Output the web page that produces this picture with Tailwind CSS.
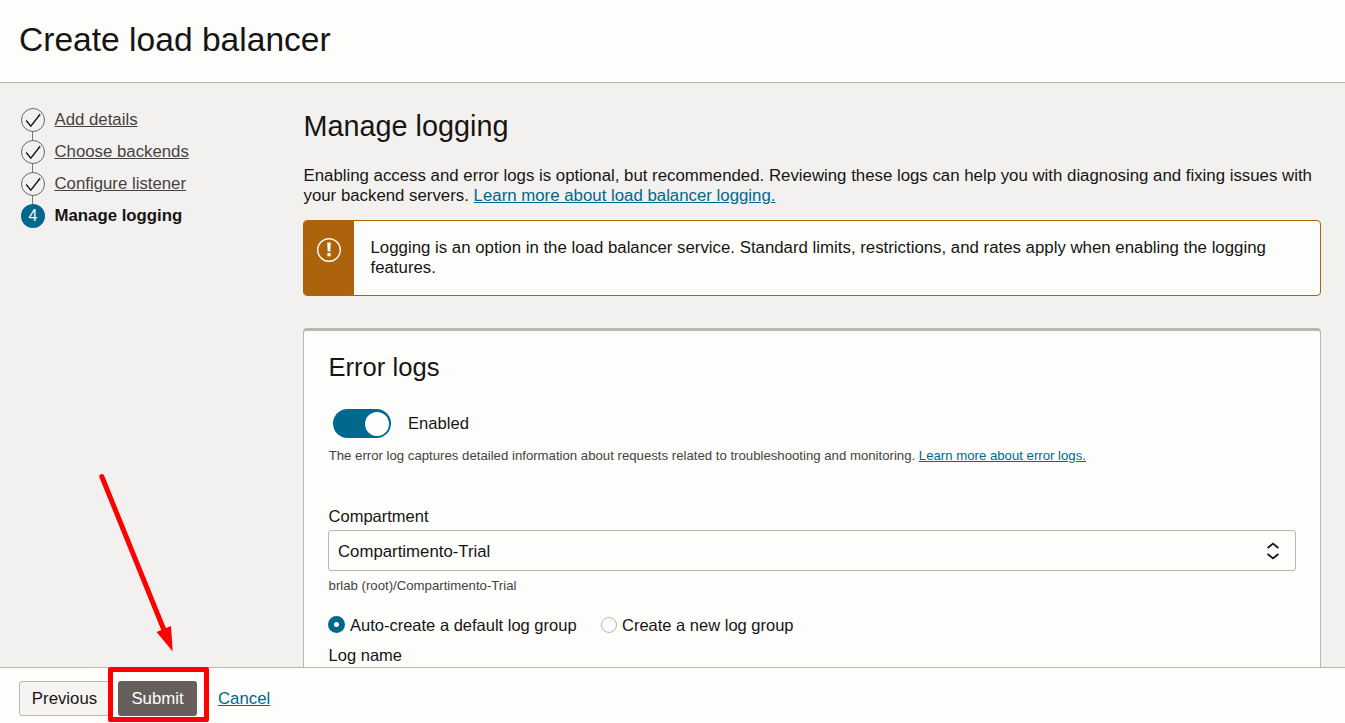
<!DOCTYPE html>
<html lang="en">
<head>
<meta charset="utf-8">
<title>Create load balancer</title>
<script src="https://cdn.jsdelivr.net/npm/@tailwindcss/browser@4"></script>
</head>
<body class="relative flex h-[723px] w-[1345px] flex-col overflow-hidden bg-[#fdfdfc] font-['Liberation_Sans',Arial,sans-serif] text-[16.8px] leading-5 text-[#161513]">
<header class="h-[83px] shrink-0 border-b border-[#bcb6b1] pl-[19px] pt-[20px]">
  <h1 class="text-[33.6px] leading-10 whitespace-nowrap">Create load balancer</h1>
</header>
<main class="flex min-h-0 flex-1 overflow-hidden bg-[#f3f1f0]">
  <nav class="w-[303px] shrink-0 pl-[21px] pt-[25px]">
    <ol class="flex flex-col">
      <li class="flex h-8 gap-[9.5px]">
        <svg class="shrink-0" width="24" height="32" viewBox="0 0 24 32" fill="none"><circle cx="12" cy="12" r="11.5" stroke="#6b6764"/><path d="M5.2 12.5l4.6 5.7L19.2 6.3" stroke="#161513" stroke-width="1.4"/><path d="M11.5 24v8" stroke="#7c7874"/></svg>
        <a class="mt-[2px] text-[#45423f] underline">Add details</a>
      </li>
      <li class="flex h-8 gap-[9.5px]">
        <svg class="shrink-0" width="24" height="32" viewBox="0 0 24 32" fill="none"><circle cx="12" cy="12" r="11.5" stroke="#6b6764"/><path d="M5.2 12.5l4.6 5.7L19.2 6.3" stroke="#161513" stroke-width="1.4"/><path d="M11.5 24v8" stroke="#7c7874"/></svg>
        <a class="mt-[2px] text-[#45423f] underline">Choose backends</a>
      </li>
      <li class="flex h-8 gap-[9.5px]">
        <svg class="shrink-0" width="24" height="32" viewBox="0 0 24 32" fill="none"><circle cx="12" cy="12" r="11.5" stroke="#6b6764"/><path d="M5.2 12.5l4.6 5.7L19.2 6.3" stroke="#161513" stroke-width="1.4"/><path d="M11.5 24v8" stroke="#7c7874"/></svg>
        <a class="mt-[2px] text-[#45423f] underline">Configure listener</a>
      </li>
      <li class="flex h-8 gap-[9.5px]">
        <span class="flex size-6 items-center justify-center rounded-full bg-[#00688c] text-[16px] text-white">4</span>
        <b class="mt-[2px]">Manage logging</b>
      </li>
    </ol>
  </nav>
  <section class="w-[1018px] shrink-0 pt-[27px]">
    <h2 class="pl-[0.5px] text-[28.8px] leading-8 whitespace-nowrap">Manage logging</h2>
    <p class="mt-6 pl-[0.5px] text-[16.82px] whitespace-nowrap">Enabling access and error logs is optional, but recommended. Reviewing these logs can help you with diagnosing and fixing issues with<br>your backend servers. <a class="text-[#00688c] underline">Learn more about load balancer logging.</a></p>
    <div class="mt-[14px] flex h-[76px] overflow-hidden rounded-[4px] border border-[#ac630c] bg-[#fdfdfc]">
      <div class="w-[50px] shrink-0 bg-[#ac630c] pl-[13px] pt-[17px]">
        <svg width="24" height="24" viewBox="0 0 24 24" fill="none"><circle cx="12" cy="12" r="11.3" stroke="#fff" stroke-width="1.4"/><path d="M10.2 4.6h3.6l-.5 9h-2.6zM10.4 15h3.2v3.2h-3.2z" fill="#fff"/></svg>
      </div>
      <p class="pl-[16.5px] pt-[17px] text-[16.82px] whitespace-nowrap">Logging is an option in the load balancer service. Standard limits, restrictions, and rates apply when enabling the logging<br>features.</p>
    </div>
    <div class="mt-8 h-[420px] rounded-[4px] border border-t-[3px] border-[#bcb6b1] bg-[#fdfdfc] px-6 pt-5">
      <h3 class="pl-[0.5px] text-[25.6px] leading-8 whitespace-nowrap">Error logs</h3>
      <div class="mt-[26px] flex h-[29px] items-center pl-[5px]">
        <span class="flex h-[29px] w-[58px] items-center justify-end rounded-full bg-[#00688c] pr-[2px]"><span class="size-6 rounded-full bg-white"></span></span>
        <span class="ml-[17px] text-[16.6px]">Enabled</span>
      </div>
      <p class="mt-[8px] pl-[0.7px] text-[13.2px] leading-5 whitespace-nowrap text-[#45423f]">The error log captures detailed information about requests related to troubleshooting and monitoring. <a class="text-[#00688c] underline">Learn more about error logs.</a></p>
      <div class="mt-[40px] pl-[0.6px] text-[16.5px]">Compartment</div>
      <div class="mt-1 flex h-[41px] items-center justify-between rounded-[3px] border border-[#bcb6b1] pl-[9px] pr-4">
        <span class="pt-[2px]">Compartimento-Trial</span>
        <svg width="12" height="18" viewBox="0 0 12 18" fill="none" stroke="#161513" stroke-width="1.8"><path d="M.6 6L6 1.6 11.4 6M.6 12L6 16.4 11.4 12"/></svg>
      </div>
      <div class="mt-[5px] pl-[0.6px] text-[13.2px] leading-5 text-[#45423f]">brlab (root)/Compartimento-Trial</div>
      <div class="mt-[19px] flex h-5 items-center text-[16.5px]">
        <span class="-mt-px flex size-[17px] items-center justify-center rounded-full bg-[#00688c]"><span class="size-[5px] rounded-full bg-white"></span></span>
        <span class="ml-[5px] w-[251px]">Auto-create a default log group</span>
        <span class="-mt-px size-[16px] rounded-full border border-[#bcb6b1]"></span>
        <span class="ml-[5px]">Create a new log group</span>
      </div>
      <div class="mt-[10px] pl-[0.6px] text-[16.5px]">Log name</div>
    </div>
  </section>
</main>
<footer class="flex h-14 shrink-0 border-t border-[#bcb6b1] pl-[19px] pt-[13px]">
  <button class="h-[35px] w-[91px] rounded-[3px] border border-[#bcb6b1] bg-[#f5f4f2]">Previous</button>
  <button class="ml-2 h-[35px] w-[79px] rounded-[3px] bg-[#665f5b] text-white">Submit</button>
  <a class="ml-[21px] mt-[8px] text-[#00688c] underline">Cancel</a>
</footer>
<div class="absolute left-[108px] top-[667px] h-[55px] w-[101px] rounded-[2px] border-5 border-[#ff0000]"></div>
<svg class="absolute left-[90px] top-[465px]" width="95" height="195" viewBox="0 0 95 195"><path d="M11.8 11.5L74 165" stroke="#f00" stroke-width="5" stroke-linecap="round"/><path d="M66.5 167l14.5-6 1.7 25.5z" fill="#f00"/></svg>
</body>
</html>
